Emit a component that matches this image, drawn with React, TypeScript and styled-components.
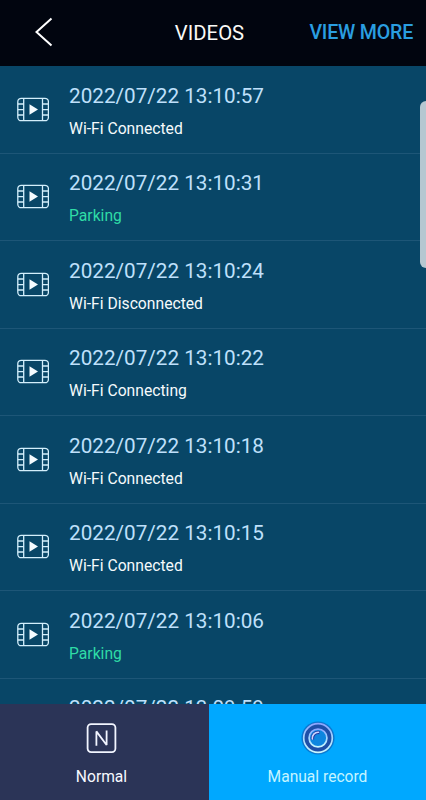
import React from "react";
import styled, { createGlobalStyle } from "styled-components";

const GlobalStyle = createGlobalStyle`
  * { box-sizing: border-box; }
  body { margin: 0; background: #084667; font-family: Roboto, "Liberation Sans", sans-serif; }
`;

const Screen = styled.div`
  position: relative;
  display: flex;
  flex-direction: column;
  width: 426px;
  height: 800px;
  overflow: hidden;
  background: #084667;
`;

const Header = styled.header`
  flex: none;
  display: grid;
  grid-template-columns: 142px 1fr 142px;
  align-items: center;
  height: 66px;
  padding-bottom: 2px;
  background: #01050f;
`;

const BackButton = styled.button`
  display: flex;
  padding: 0 0 0 34px;
  border: 0;
  background: none;
`;

const Title = styled.h1`
  margin: 0;
  padding: 2px 7px 0 0;
  text-align: center;
  white-space: nowrap;
  font-size: 20.3px;
  font-weight: 400;
  line-height: 24px;
  color: #fafaf6;
`;

const ViewMore = styled.a`
  justify-self: end;
  padding: 2px 13px 0 0;
  white-space: nowrap;
  font-size: 19.6px;
  font-weight: 500;
  letter-spacing: -0.2px;
  line-height: 24px;
  color: #2a9ee0;
`;

const List = styled.ul`
  flex: 1;
  min-height: 0;
  margin: 0;
  padding: 0;
  overflow: hidden;
  list-style: none;
`;

const Row = styled.li`
  display: flex;
  gap: 20px;
  height: 87.5px;
  padding: 15.6px 0 0 17px;
  border-bottom: 1px solid #1d5677;
`;

const FilmSvg = styled.svg`
  flex: none;
  margin-top: 15px;
`;

const Details = styled.div`
  display: flex;
  flex-direction: column;
  gap: 8px;
  white-space: nowrap;
`;

const Time = styled.time`
  font-size: 20.7px;
  line-height: 28px;
  color: #bfe0fb;
`;

const Status = styled.span<{ $parking: boolean }>`
  font-size: 15.7px;
  line-height: 22px;
  color: ${(p) => (p.$parking ? "#2fdca6" : "#f5fafc")};
`;

const ScrollThumb = styled.div`
  position: absolute;
  top: 101px;
  right: 0;
  width: 6px;
  height: 167px;
  border-radius: 6px 0 0 6px;
  background: #b5c7d1;
`;

const TabBar = styled.nav`
  flex: none;
  display: flex;
  height: 96px;
`;

const Tab = styled.button<{ $active?: boolean }>`
  display: flex;
  flex-direction: column;
  align-items: center;
  gap: 9px;
  width: ${(p) => (p.$active ? "217px" : "209px")};
  padding: ${(p) => (p.$active ? "15px 0 0" : "15px 6px 0 0")};
  border: 0;
  background: ${(p) => (p.$active ? "#00a8ff" : "#2b3457")};
  color: ${(p) => (p.$active ? "#c5f4ff" : "#f7f9ff")};
  font-family: inherit;
  font-size: 15.6px;
  line-height: 22px;
`;

const FilmIcon = () => (
  <FilmSvg width="32" height="25" viewBox="0 0 32 25" fill="none" stroke="#d3effc" strokeWidth="1.3">
    <rect x="0.8" y="1.3" width="30.6" height="22.4" rx="3.5" />
    <path d="M6.7 1.3V23.7M25.5 1.3V23.7M.8 7H6.7M.8 12.6H6.7M.8 18H6.7M25.5 7H31.4M25.5 12.6H31.4M25.5 18H31.4" />
    <path d="M12.5 7.3V17.7L21 12.5Z" fill="#f4fbff" stroke="none" />
  </FilmSvg>
);

const NormalIcon = () => (
  <svg width="38" height="38" viewBox="0 0 38 38" fill="none" stroke="#f2f5ff">
    <rect x="4.6" y="5.1" width="27.8" height="28" rx="3.5" strokeWidth="1.8" />
    <path d="M13.4 26.8V12.4L23.6 26V11.4" strokeWidth="1.8" strokeLinejoin="bevel" />
  </svg>
);

const RecordIcon = () => (
  <svg width="38" height="38" viewBox="0 0 38 38" fill="none">
    <defs>
      <linearGradient id="ring" x1="0" y1="0" x2="0" y2="1">
        <stop offset="0" stopColor="#8aa5ff" />
        <stop offset="0.5" stopColor="#a4d8ff" />
        <stop offset="1" stopColor="#c6f6ff" />
      </linearGradient>
    </defs>
    <circle cx="19" cy="19" r="16.6" fill="#0b62bb" fillOpacity=".65" />
    <circle cx="19" cy="19" r="15.3" fill="#1e4fa8" />
    <circle cx="19" cy="19" r="14.3" stroke="url(#ring)" strokeWidth="1.7" />
    <circle cx="19" cy="19" r="8.9" fill="#0d86df" stroke="url(#ring)" strokeWidth="1.7" />
    <path d="M13.6 20.5A5.8 5.8 0 0 1 20.5 13.6" stroke="#2431a0" strokeWidth="3.2" />
    <path d="M13.3 20A6 6 0 0 1 19.5 13.2" stroke="#c6d8ff" strokeWidth="1.6" strokeLinecap="round" />
  </svg>
);

const videos = [
  ["2022/07/22 13:10:57", "Wi-Fi Connected"],
  ["2022/07/22 13:10:31", "Parking"],
  ["2022/07/22 13:10:24", "Wi-Fi Disconnected"],
  ["2022/07/22 13:10:22", "Wi-Fi Connecting"],
  ["2022/07/22 13:10:18", "Wi-Fi Connected"],
  ["2022/07/22 13:10:15", "Wi-Fi Connected"],
  ["2022/07/22 13:10:06", "Parking"],
  ["2022/07/22 13:09:59", "Wi-Fi Connected"],
];

export default function App() {
  return (
    <Screen>
      <GlobalStyle />
      <Header>
        <BackButton aria-label="Back">
          <svg width="20" height="32" viewBox="0 0 20 32" fill="none" stroke="#fff" strokeWidth="2">
            <path d="M17.5 2.5L2.5 16L17.5 29.5" />
          </svg>
        </BackButton>
        <Title>VIDEOS</Title>
        <ViewMore>VIEW MORE</ViewMore>
      </Header>
      <List>
        {videos.map(([time, status]) => (
          <Row key={time}>
            <FilmIcon />
            <Details>
              <Time>{time}</Time>
              <Status $parking={status === "Parking"}>{status}</Status>
            </Details>
          </Row>
        ))}
      </List>
      <TabBar>
        <Tab>
          <NormalIcon />
          Normal
        </Tab>
        <Tab $active>
          <RecordIcon />
          Manual record
        </Tab>
      </TabBar>
      <ScrollThumb />
    </Screen>
  );
}
